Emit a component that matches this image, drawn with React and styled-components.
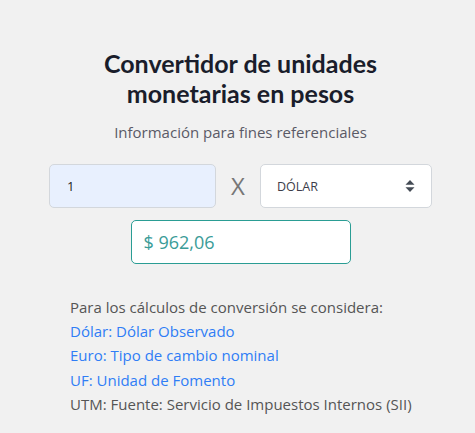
import React from "react";
import styled, { createGlobalStyle } from "styled-components";

const Global = createGlobalStyle`
  html, body { margin: 0; padding: 0; background: #f1f1f1; }
  body { font-family: "Open Sans", "Noto Sans", sans-serif; }
  * { box-sizing: border-box; }
`;

const Page = styled.div`
  width: 475px;
  height: 433px;
  background: #f1f1f1;
  padding: 48px 43px 0 49px;
  display: flex;
  flex-direction: column;
  align-items: center;
`;

const Title = styled.h1`
  margin: 0;
  font-family: Lato, "Open Sans", sans-serif;
  font-weight: 700;
  font-size: 25px;
  line-height: 30px;
  color: #1a1d2b;
  text-align: center;
  width: 300px;
`;

const Subtitle = styled.p`
  margin: 14px 0 0;
  font-size: 15px;
  line-height: 20px;
  color: #5a5a66;
  text-align: center;
`;

const Row = styled.div`
  margin-top: 22px;
  width: 100%;
  display: flex;
  align-items: center;
  justify-content: space-between;
`;

const Field = styled.div`
  height: 44px;
  width: ${(p) => p.$w}px;
  border: 1px solid ${(p) => p.$border || "#d3d7dc"};
  border-radius: 5px;
  background: ${(p) => p.$bg || "#fff"};
  display: flex;
  align-items: center;
  padding-left: ${(p) => p.$pl || 16}px;
  padding-right: 16px;
  color: ${(p) => p.$color || "#222"};
  font-size: ${(p) => p.$fs || 13}px;
`;

const Times = styled.span`
  font-size: 24px;
  color: #777;
  font-family: "Open Sans", sans-serif;
  line-height: 1;
`;

const SelectText = styled.span`
  flex: 1;
  color: #3d3d4a;
`;

const Output = styled(Field)`
  margin-top: 12px;
`;

const Notes = styled.div`
  margin-top: 31px;
  align-self: flex-start;
  padding-left: 21px;
  font-size: 15px;
  line-height: 24.2px;
  color: #555;
`;

const Line = styled.div`
  color: ${(p) => (p.$link ? "#2f7df6" : "#555")};
`;

const Sort = () => (
  <svg width="10" height="14" viewBox="0 0 10 14">
    <path d="M5 1 L9.5 5.8 H0.5 Z" fill="#444b55" />
    <path d="M5 13 L9.5 8.2 H0.5 Z" fill="#444b55" />
  </svg>
);

export default function App() {
  return (
    <>
      <Global />
      <Page>
        <Title>Convertidor de unidades monetarias en pesos</Title>
        <Subtitle>Información para fines referenciales</Subtitle>
        <Row>
          <Field $w={167} $bg="#e8f0fe" $pl={17}>1</Field>
          <Times>X</Times>
          <Field $w={172} $fs={12.5}>
            <SelectText>DÓLAR</SelectText>
            <Sort />
          </Field>
        </Row>
        <Output $w={220} $border="#2a9d94" $color="#3a9c98" $fs={18} $pl={12}>
          $ 962,06
        </Output>
        <Notes>
          <Line>Para los cálculos de conversión se considera:</Line>
          <Line $link>Dólar: Dólar Observado</Line>
          <Line $link>Euro: Tipo de cambio nominal</Line>
          <Line $link>UF: Unidad de Fomento</Line>
          <Line>UTM: Fuente: Servicio de Impuestos Internos (SII)</Line>
        </Notes>
      </Page>
    </>
  );
}
